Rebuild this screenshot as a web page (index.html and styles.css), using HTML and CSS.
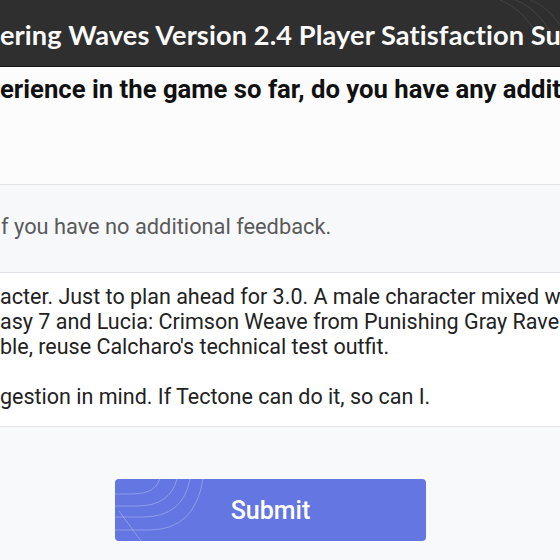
FILE: index.html
```html
<!DOCTYPE html>
<html lang="en">
<head>
<meta charset="utf-8">
<title>Player Satisfaction Survey</title>
<link rel="stylesheet" href="styles.css">
</head>
<body>
<header class="top">
  <h1 class="title">ering Waves Version 2.4 Player Satisfaction Sur</h1>
  <svg class="top-deco" width="80" height="40" viewBox="0 0 80 40" aria-hidden="true">
    <path d="M20 0 Q45 10 60 40" />
    <path d="M35 0 Q58 8 75 40" />
    <path d="M50 0 Q70 6 90 40" />
  </svg>
</header>
<main class="form">
  <h2 class="question">erience in the game so far, do you have any additi</h2>
  <div class="field placeholder">f you have no additional feedback.</div>
  <div class="field answer">
    <p class="line">acter. Just to plan ahead for 3.0. A male character mixed w</p>
    <p class="line">asy 7 and Lucia: Crimson Weave from Punishing Gray Rave</p>
    <p class="line">ble, reuse Calcharo's technical test outfit.</p>
    <p class="line blank">&nbsp;</p>
    <p class="line">gestion in mind. If Tectone can do it, so can I.</p>
  </div>
  <div class="actions">
    <button class="submit" type="button">
      <svg class="btn-deco" width="100" height="62" viewBox="0 0 100 62" aria-hidden="true">
        <path d="M0 15 H18 Q40 15 45 0" />
        <path d="M0 27 H22 Q55 27 62 0" />
        <path d="M0 38 H28 Q68 38 75 0" />
        <path d="M0 51 H34 Q80 51 88 0" />
        <path d="M4 32 L26 62" />
      </svg>
      <span class="label">Submit</span>
    </button>
  </div>
</main>
</body>
</html>
```
FILE: styles.css
```css
* { box-sizing: border-box; }
html, body {
  margin: 0;
  padding: 0;
  width: 560px;
  height: 560px;
  overflow: hidden;
  background: #f8f9fb;
  font-family: Roboto, "Liberation Sans", sans-serif;
}
.top {
  position: relative;
  height: 67px;
  background: #2f2f2f;
  border-bottom: 1px solid #151515;
  display: flex;
  align-items: center;
  padding-top: 2px;
  overflow: hidden;
}
.title {
  margin: 0;
  padding-left: 0;
  white-space: nowrap;
  color: #fafafa;
  font-family: Lato, "Open Sans", sans-serif;
  font-weight: 700;
  font-size: 27.2px;
  letter-spacing: 0.1px;
}
.top-deco {
  position: absolute;
  right: 0;
  top: 0;
  fill: none;
  stroke: rgba(255,255,255,0.08);
  stroke-width: 1.2;
}
.form {
  display: flex;
  flex-direction: column;
}
.question {
  margin: 0;
  height: 117px;
  padding: 7px 0 0 0;
  background: #fcfcfd;
  white-space: nowrap;
  overflow: hidden;
  font-weight: 700;
  font-size: 25.7px;
  line-height: 30px;
  color: #111;
}
.field {
  white-space: nowrap;
  overflow: hidden;
  border-top: 1px solid #e2e3e6;
}
.placeholder {
  height: 88px;
  padding: 29px 0 0 1px;
  background: #f7f8fa;
  color: #5a5a5a;
  font-size: 21.8px;
  line-height: 25px;
}
.answer {
  height: 155px;
  padding: 11px 0 0 0;
  background: #ffffff;
  border-bottom: 1px solid #e2e3e6;
  color: #222;
  font-size: 21.5px;
  line-height: 25px;
}
.line { margin: 0; }
.actions {
  display: flex;
  padding: 52px 0 0 115px;
}
.submit {
  position: relative;
  width: 311px;
  height: 62px;
  border: none;
  border-radius: 4px;
  background: #6476e2;
  color: #fff;
  font-family: Roboto, sans-serif;
  font-weight: 500;
  font-size: 25px;
  overflow: hidden;
  padding: 0;
}
.btn-deco {
  position: absolute;
  left: 0;
  top: 0;
  fill: none;
  stroke: rgba(255,255,255,0.28);
  stroke-width: 1;
}
.label { position: relative; }
```
